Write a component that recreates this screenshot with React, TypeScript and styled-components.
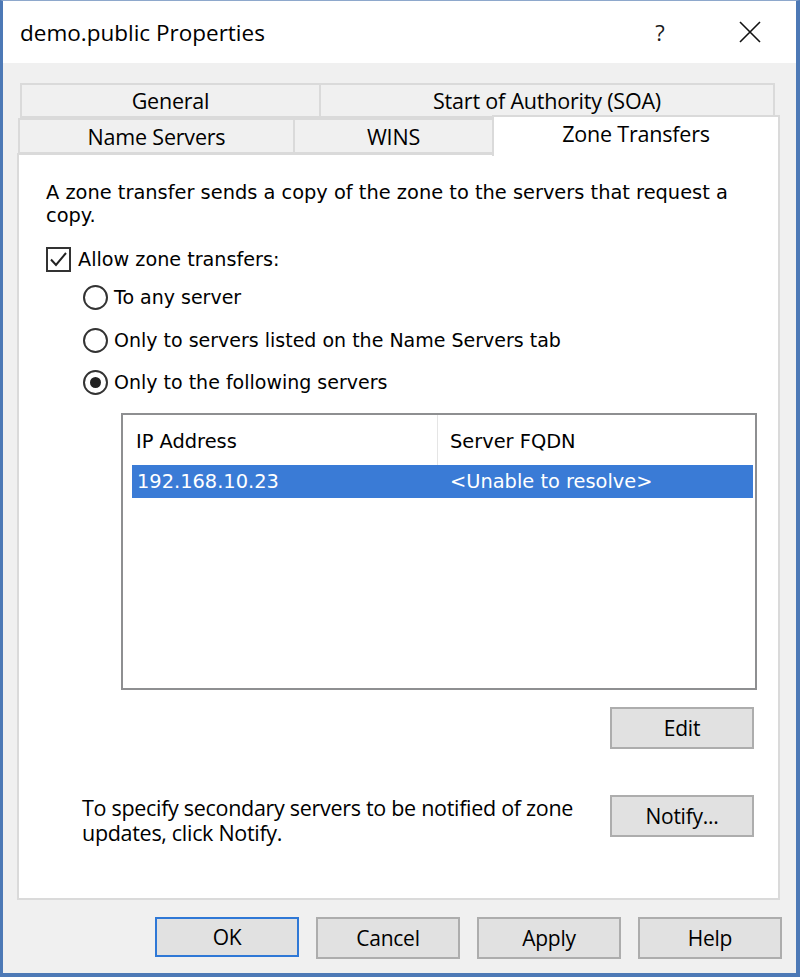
import React from "react";
import styled, { createGlobalStyle } from "styled-components";

const GlobalStyle = createGlobalStyle`
  html, body { margin: 0; padding: 0; background: #ffffff; }
  * { box-sizing: border-box; }
`;

const SEGOE = `"Open Sans", "Noto Sans", sans-serif`;
const TAHOMA = `"DejaVu Sans", "Verdana", sans-serif`;

const Window = styled.div`
  width: 800px;
  height: 977px;
  display: flex;
  flex-direction: column;
  border-left: 3px solid #4d79b6;
  border-right: 4px solid #4d79b6;
  border-bottom: 4px solid #4d79b6;
  border-top: 1px solid #8ea8cc;
  background: #f0f0f0;
`;

const TitleBar = styled.div`
  height: 62px;
  background: #ffffff;
  display: flex;
  align-items: center;
  padding-left: 17px;
  font-family: ${SEGOE};
  color: #000;
`;

const TitleText = styled.div`
  flex: 1;
  font-size: 22.5px;
`;

const TitleButton = styled.div<{ $w: number }>`
  width: ${(p) => p.$w}px;
  height: 62px;
  display: flex;
  align-items: center;
  justify-content: center;
  font-family: ${SEGOE};
  font-size: 22px;
  font-weight: 400;
  color: #1a1a1a;
`;

const Body = styled.div`
  flex: 1;
  display: flex;
  flex-direction: column;
  padding: 20px 13px 0 14px;
`;

const TabRow = styled.div<{ $ml: number }>`
  display: flex;
  height: 35px;
  margin-left: ${(p) => p.$ml}px;
`;

const Tab = styled.div<{ $w: number; $selected?: boolean; $h: number }>`
  width: ${(p) => p.$w}px;
  height: ${(p) => (p.$selected ? p.$h + 5 : p.$h)}px;
  margin-top: ${(p) => (p.$selected ? -3 : 0)}px;
  margin-bottom: ${(p) => (p.$selected ? -2 : 0)}px;
  position: relative;
  z-index: ${(p) => (p.$selected ? 2 : 1)};
  background: ${(p) => (p.$selected ? "#ffffff" : "#f0f0f0")};
  border: 2px solid #dadada;
  border-bottom: ${(p) => (p.$selected ? "none" : "2px solid #dadada")};
  margin-right: -2px;
  display: flex;
  align-items: ${(p) => (p.$selected ? "flex-start" : "center")};
  padding-top: ${(p) => (p.$selected ? 2 : 0)}px;
  justify-content: center;
  font-family: ${SEGOE};
  font-size: 21.5px;
  letter-spacing: -0.2px;
  color: #000;
`;

const Panel = styled.div`
  height: 747px;
  width: 763px;
  background: #ffffff;
  border: 2px solid #dadada;
  display: flex;
  flex-direction: column;
  padding: 26px 24px 0 27px;
  position: relative;
  z-index: 1;
`;

const Desc = styled.div`
  font-family: ${TAHOMA};
  font-size: 19.4px;
  line-height: 23px;
  color: #000;
`;

const CheckRow = styled.label`
  display: flex;
  align-items: center;
  height: 26px;
  margin-top: 19px;
  font-family: ${TAHOMA};
  font-size: 19.2px;
  color: #000;
`;

const Box = styled.span`
  width: 25px;
  height: 25px;
  border: 2px solid #333;
  display: flex;
  align-items: center;
  justify-content: center;
  margin-right: 7px;
  background: #fff;
`;

const RadioRow = styled.label<{ $mt: number }>`
  display: flex;
  align-items: center;
  height: 26px;
  margin-top: ${(p) => p.$mt}px;
  margin-left: 37px;
  font-family: ${TAHOMA};
  font-size: 19px;
  color: #000;
`;

const RadioCircle = styled.span<{ $on?: boolean }>`
  width: 25px;
  height: 25px;
  border: 2px solid #333;
  border-radius: 50%;
  display: flex;
  align-items: center;
  justify-content: center;
  margin-right: 6px;
  background: #fff;
  &::after {
    content: "";
    display: ${(p) => (p.$on ? "block" : "none")};
    width: 11px;
    height: 11px;
    border-radius: 50%;
    background: #222;
  }
`;

const ListBox = styled.div`
  margin-top: 18px;
  margin-left: 75px;
  width: 636px;
  height: 277px;
  border: 2px solid #8e8f91;
  background: #fff;
  padding: 0 2px 0 9px;
  font-family: ${TAHOMA};
  font-size: 19.4px;
`;

const HeaderRow = styled.div`
  display: flex;
  height: 50px;
`;

const HeaderCell = styled.div<{ $w?: number; $divider?: boolean }>`
  ${(p) => (p.$w ? `width: ${p.$w}px;` : "flex: 1;")}
  display: flex;
  align-items: center;
  padding-top: 2px;
  padding-left: ${(p) => (p.$divider ? 12 : 4)}px;
  border-left: ${(p) => (p.$divider ? "1px solid #e5e5e5" : "none")};
  color: #000;
`;

const DataRow = styled.div<{ $selected?: boolean }>`
  display: flex;
  height: 33px;
  background: ${(p) => (p.$selected ? "#3a7bd6" : "transparent")};
  color: ${(p) => (p.$selected ? "#ffffff" : "#000")};
`;

const DataCell = styled.div<{ $w?: number; $pl: number }>`
  ${(p) => (p.$w ? `width: ${p.$w}px;` : "flex: 1;")}
  display: flex;
  align-items: center;
  padding-left: ${(p) => p.$pl}px;
`;

const ButtonRight = styled.div<{ $mt: number }>`
  display: flex;
  justify-content: flex-end;
  margin-top: ${(p) => p.$mt}px;
`;

const Button = styled.button<{ $default?: boolean }>`
  width: 144px;
  height: ${(p) => (p.$default ? 40 : 42)}px;
  background: #e1e1e1;
  border: 2px solid ${(p) => (p.$default ? "#2f78d6" : "#adadad")};
  font-family: ${SEGOE};
  font-size: 21px;
  letter-spacing: -0.25px;
  color: #000;
  padding: 0;
  margin: 0;
  display: flex;
  align-items: center;
  justify-content: center;
`;

const NotifyRow = styled.div`
  display: flex;
  align-items: flex-start;
  justify-content: space-between;
  margin-top: 46px;
  margin-left: 36px;
`;

const NotifyText = styled.div`
  font-family: ${SEGOE};
  font-size: 21.5px;
  letter-spacing: -0.3px;
  line-height: 25px;
  color: #000;
  white-space: nowrap;
`;

const BottomBar = styled.div`
  display: flex;
  justify-content: flex-end;
  gap: 17px;
  margin-top: 17px;
  padding-right: 1px;
`;

export default function App() {
  return (
    <>
      <GlobalStyle />
      <Window>
        <TitleBar>
          <TitleText>demo.public Properties</TitleText>
          <TitleButton $w={40}>?</TitleButton>
          <TitleButton $w={50} />
          <TitleButton $w={40}>
            <svg width="22" height="22" viewBox="0 0 22 22">
              <path d="M1 1 L21 21 M21 1 L1 21" stroke="#111" strokeWidth="1.6" fill="none" />
            </svg>
          </TitleButton>
          <TitleButton $w={26} />
        </TitleBar>
        <Body>
          <TabRow $ml={3}>
            <Tab $w={301} $h={35}>General</Tab>
            <Tab $w={456} $h={35}>Start of Authority (SOA)</Tab>
          </TabRow>
          <TabRow $ml={1}>
            <Tab $w={277} $h={36}>Name Servers</Tab>
            <Tab $w={201} $h={36}>WINS</Tab>
            <Tab $w={288} $h={36} $selected>Zone Transfers</Tab>
          </TabRow>
          <Panel>
            <Desc>
              A zone transfer sends a copy of the zone to the servers that request a
              <br />
              copy.
            </Desc>
            <CheckRow>
              <Box>
                <svg width="19" height="17" viewBox="0 0 19 17">
                  <path d="M2 8.5 L7 14 L17 2" stroke="#222" strokeWidth="2" fill="none" />
                </svg>
              </Box>
              Allow zone transfers:
            </CheckRow>
            <RadioRow $mt={12}>
              <RadioCircle />
              To any server
            </RadioRow>
            <RadioRow $mt={17}>
              <RadioCircle />
              Only to servers listed on the Name Servers tab
            </RadioRow>
            <RadioRow $mt={16}>
              <RadioCircle $on />
              Only to the following servers
            </RadioRow>
            <ListBox>
              <HeaderRow>
                <HeaderCell $w={305}>IP Address</HeaderCell>
                <HeaderCell $divider>Server FQDN</HeaderCell>
              </HeaderRow>
              <DataRow $selected>
                <DataCell $w={305} $pl={5}>192.168.10.23</DataCell>
                <DataCell $pl={13}>&lt;Unable to resolve&gt;</DataCell>
              </DataRow>
            </ListBox>
            <ButtonRight $mt={17}>
              <Button>Edit</Button>
            </ButtonRight>
            <NotifyRow>
              <NotifyText>
                To specify secondary servers to be notified of zone
                <br />
                updates, click Notify.
              </NotifyText>
              <Button>Notify...</Button>
            </NotifyRow>
          </Panel>
          <BottomBar>
            <Button $default>OK</Button>
            <Button>Cancel</Button>
            <Button>Apply</Button>
            <Button>Help</Button>
          </BottomBar>
        </Body>
      </Window>
    </>
  );
}
